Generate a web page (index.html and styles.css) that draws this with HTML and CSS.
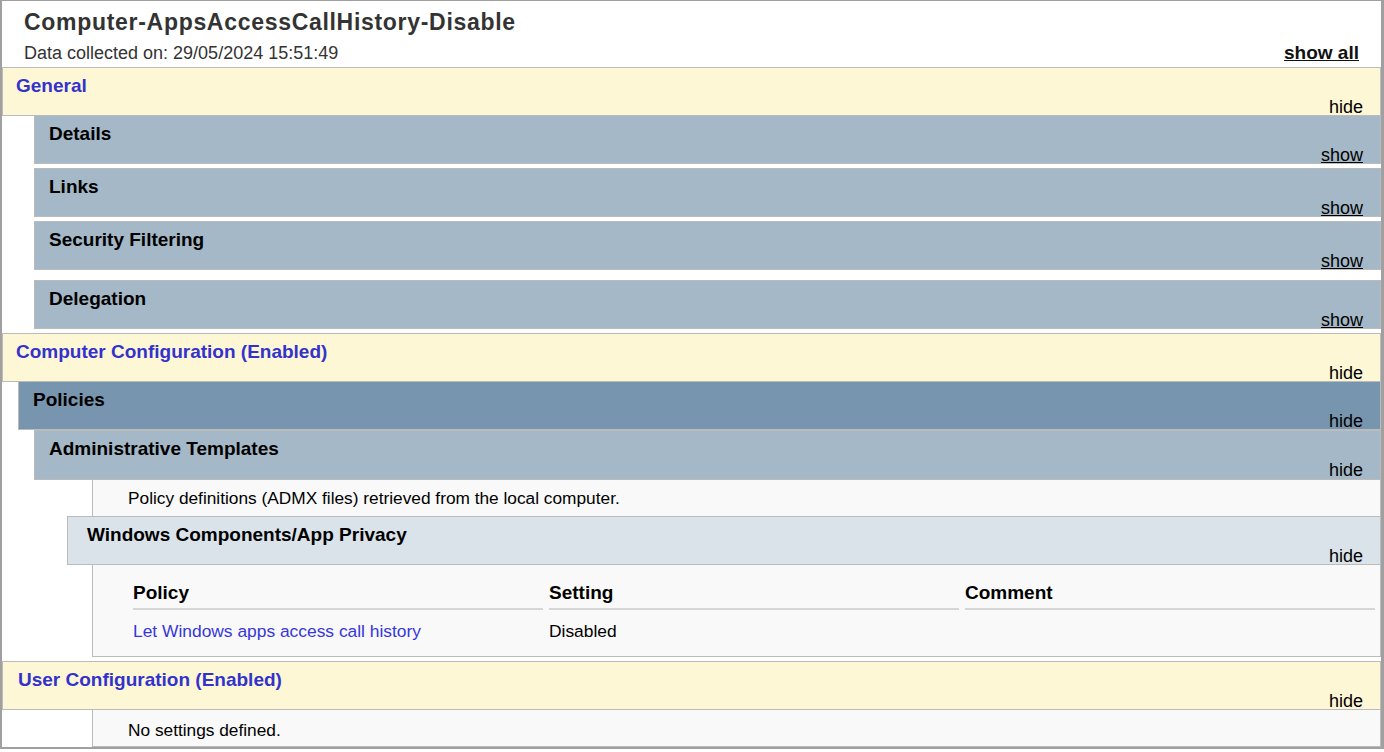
FILE: index.html
```html
<!DOCTYPE html>
<html lang="en">
<head>
<meta charset="utf-8">
<title>Computer-AppsAccessCallHistory-Disable</title>
<link rel="stylesheet" href="styles.css">
</head>
<body>
<div class="frame">
  <header class="report-head">
    <div class="gpo-name">Computer-AppsAccessCallHistory-Disable</div>
    <div class="head-row">
      <span class="dtstamp">Data collected on: 29/05/2024 15:51:49</span>
      <span class="showall">show all</span>
    </div>
  </header>

  <section class="bar he0">
    <div class="bar-title">General</div>
    <div class="toggle">hide</div>
  </section>
  <section class="bar he1 join">
    <div class="bar-title">Details</div>
    <div class="toggle link">show</div>
  </section>
  <section class="bar he1 gap">
    <div class="bar-title">Links</div>
    <div class="toggle link">show</div>
  </section>
  <section class="bar he1 gap">
    <div class="bar-title">Security Filtering</div>
    <div class="toggle link">show</div>
  </section>
  <section class="bar he1 gap-wide">
    <div class="bar-title">Delegation</div>
    <div class="toggle link">show</div>
  </section>

  <section class="bar he0 gap">
    <div class="bar-title">Computer Configuration (Enabled)</div>
    <div class="toggle">hide</div>
  </section>
  <section class="bar he-policies join">
    <div class="bar-title">Policies</div>
    <div class="toggle">hide</div>
  </section>
  <section class="bar he2 tall">
    <div class="bar-title">Administrative Templates</div>
    <div class="toggle">hide</div>
  </section>
  <div class="info join">Policy definitions (ADMX files) retrieved from the local computer.</div>
  <section class="bar he3 join">
    <div class="bar-title">Windows Components/App Privacy</div>
    <div class="toggle">hide</div>
  </section>
  <div class="settings join">
    <div class="settings-grid">
      <div class="th">Policy</div>
      <div class="th">Setting</div>
      <div class="th">Comment</div>
      <div class="td"><span class="policy-link">Let Windows apps access call history</span></div>
      <div class="td">Disabled</div>
      <div class="td"></div>
    </div>
  </div>

  <section class="bar he0 gap">
    <div class="bar-title user-title">User Configuration (Enabled)</div>
    <div class="toggle">hide</div>
  </section>
  <div class="info info-last join">No settings defined.</div>
</div>
</body>
</html>
```
FILE: styles.css
```css
body {
  margin: 0;
  background: #ffffff;
  font-family: "Liberation Sans", Arial, sans-serif;
  color: #000000;
}

.frame {
  box-sizing: border-box;
  width: 1384px;
  height: 749px;
  border-style: solid;
  border-color: #a0a0a0;
  border-width: 1px 3px 2px 2px;
  overflow: hidden;
  background: #ffffff;
}

/* report header */
.report-head {
  box-sizing: border-box;
  height: 66px;
  padding: 8px 22px 0 22px;
}

.gpo-name {
  color: #333333;
  font-size: 23px;
  font-weight: bold;
  line-height: 26px;
  letter-spacing: 0.7px;
}

.head-row {
  display: flex;
  justify-content: space-between;
  align-items: baseline;
  margin-top: 7px;
  line-height: 21px;
}

.dtstamp {
  color: #333333;
  font-size: 18px;
}

.showall {
  color: #111111;
  font-size: 19px;
  font-weight: bold;
  text-decoration: underline;
}

/* collapsible section bars */
.bar {
  box-sizing: border-box;
  height: 49px;
  border: 1px solid #bbbbbb;
  padding-top: 7px;
}

.bar-title {
  font-size: 19px;
  font-weight: bold;
  line-height: 22px;
  white-space: nowrap;
}

.toggle {
  text-align: right;
  font-size: 18px;
  line-height: 21px;
  padding-right: 17px;
}

.toggle.link {
  text-decoration: underline;
}

.he0 {
  background: #fef7d6;
  padding-left: 13px;
}

.he0 .bar-title {
  color: #3333cc;
}

.user-title {
  padding-left: 2px;
}

.he1 {
  background: #a4b8c7;
  margin-left: 32px;
  padding-left: 14px;
}

.he-policies {
  background: #7795ae;
  margin-left: 16px;
  padding-left: 14px;
}

.he2 {
  background: #a4b8c7;
  margin-left: 32px;
  padding-left: 14px;
}

.he3 {
  background: #dbe3ea;
  margin-left: 65px;
  padding-left: 19px;
}

.tall {
  height: 50px;
}

.join {
  margin-top: -1px;
}

.gap {
  margin-top: 4px;
}

.gap-wide {
  margin-top: 10px;
}

/* info rows */
.info {
  box-sizing: border-box;
  height: 38px;
  margin-left: 90px;
  border: 1px solid #bbbbbb;
  background: #f9f9f9;
  padding: 8px 0 0 35px;
  font-size: 17.3px;
  line-height: 21px;
}

.info-last {
  padding-top: 10px;
}

/* settings table */
.settings {
  box-sizing: border-box;
  height: 93px;
  margin-left: 90px;
  border: 1px solid #bbbbbb;
  background: #f9f9f9;
  padding: 17px 3px 0 40px;
}

.settings-grid {
  display: grid;
  grid-template-columns: repeat(3, 410px);
  column-gap: 6px;
}

.th {
  font-size: 19px;
  font-weight: bold;
  line-height: 21px;
  padding-bottom: 5px;
  border-bottom: 2px solid #d6d6d6;
}

.td {
  font-size: 17.4px;
  line-height: 21px;
  margin-top: 11px;
}

.policy-link {
  color: #3636dd;
}
```
